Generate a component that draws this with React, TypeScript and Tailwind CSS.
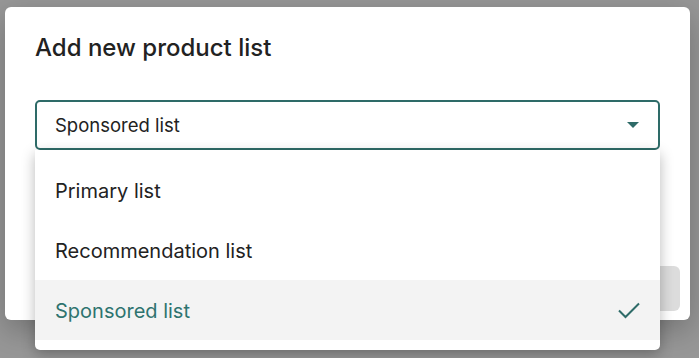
const options = ["Primary list", "Recommendation list", "Sponsored list"];
const selected = "Sponsored list";

export default function App() {
  return (
    <div
      className="w-[699px] h-[358px] overflow-hidden bg-[#979797] pt-[7px] pl-[5px]"
      style={{ fontFamily: "Inter, 'Noto Sans', sans-serif" }}
    >
      <div className="relative flex h-[313px] w-[685px] flex-col rounded-[6px] bg-white px-[30px] pt-[26px] shadow-[0_10px_30px_rgba(0,0,0,0.25)]">
        <h2 className="text-[24px] font-[550] leading-[30px] text-[#222]">Add new product list</h2>

        <div className="relative mt-[37px]">
          <button
            type="button"
            className="flex h-[50px] w-full items-center justify-between rounded-[5px] border-2 border-[#2e6b68] bg-white pl-[18px] pr-[19px] text-left text-[18.5px] leading-none text-[#222]"
          >
            <span>{selected}</span>
            <span className="h-0 w-0 border-x-[6px] border-t-[6px] border-x-transparent border-t-[#2e6b68]" />
          </button>

          {/* open listbox, drawn over the dialog */}
          <ul className="absolute left-0 right-0 top-full z-10 rounded-b-[5px] bg-white py-[10px] shadow-[0_4px_14px_rgba(0,0,0,0.28)]">
            {options.map((o) => {
              const active = o === selected;
              return (
                <li
                  key={o}
                  className={`flex h-[60px] items-center justify-between pl-[20px] pr-[20px] text-[20px] ${
                    active ? "bg-[#f3f3f3] text-[#2e736f]" : "text-[#222]"
                  }`}
                >
                  <span className="translate-y-[1px]">{o}</span>
                  {active && (
                    <svg width="22" height="17" viewBox="0 0 22 17" fill="none" className="text-[#2e6b68]">
                      <polyline points="1,8.5 7.5,15 21,1.5" stroke="currentColor" strokeWidth="2" />
                    </svg>
                  )}
                </li>
              );
            })}
          </ul>
        </div>

        <div className="mt-auto -mr-[20px] flex justify-end pb-[9px]">
          <button type="button" className="h-[45px] w-[120px] rounded-[6px] bg-[#dcdcdc]" />
        </div>
      </div>
    </div>
  );
}
